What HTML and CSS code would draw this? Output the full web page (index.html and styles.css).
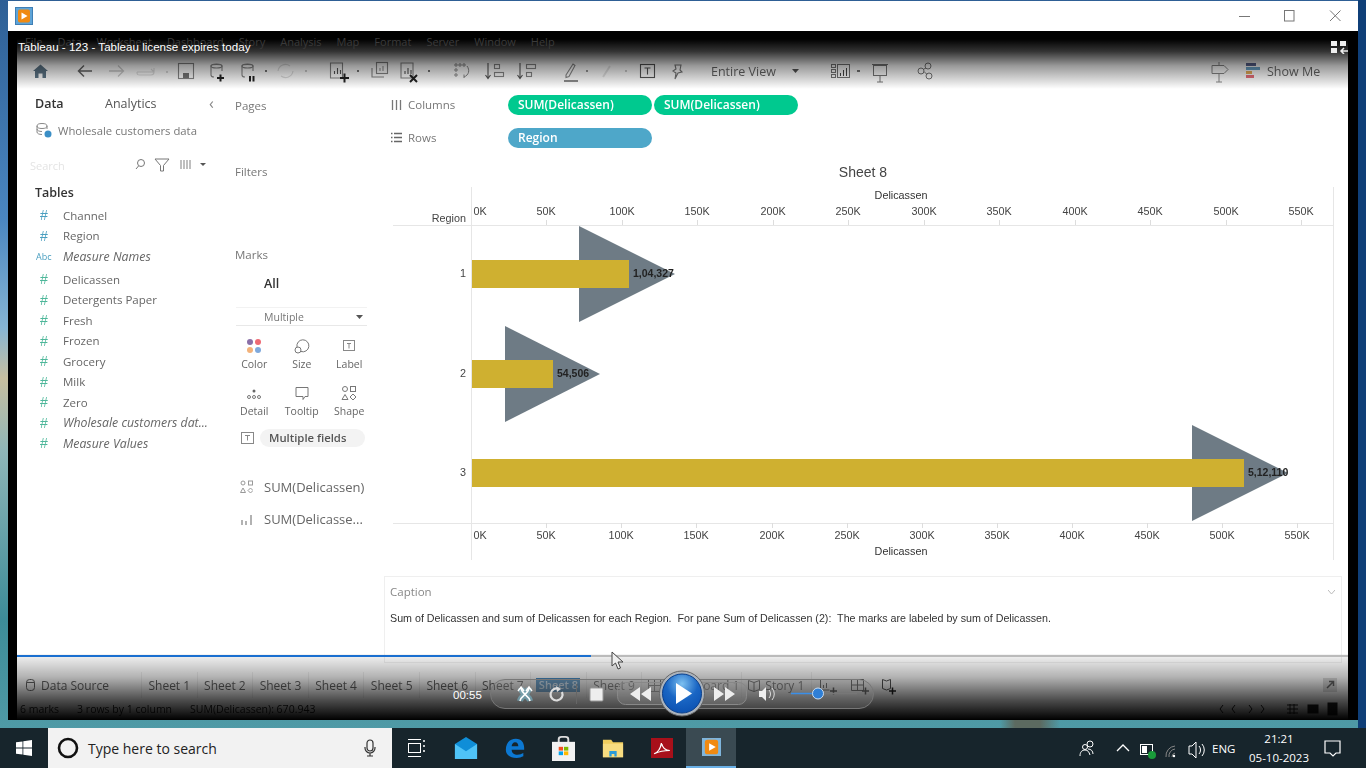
FILE: index.html
```html
<!DOCTYPE html>
<html lang="en">
<head>
<meta charset="utf-8">
<title>Tableau - 123</title>
<link rel="stylesheet" href="styles.css">
</head>
<body>
<div class="desktop">
  <div class="window">
    <div class="titlebar">
      <svg class="app-icon" width="18" height="18" viewBox="0 0 18 18"><rect x="0.5" y="0.5" width="17" height="17" fill="#5ea4d8" stroke="#3f7fb5"/><rect x="3" y="2.5" width="12" height="13" rx="2" fill="#f08a12"/><path d="M6.500 5.500v7l6-3.500z" fill="#fff"/></svg>
      <svg class="win-btns" width="116" height="14" viewBox="0 0 116 14"><path d="M0 7.500h11" stroke="#777"/><rect x="45.500" y="1.500" width="9.500" height="10.500" fill="none" stroke="#777"/><path d="M91 1.500l10.500 10.500M101.500 1.500L91 12" stroke="#777" fill="none"/></svg>
    </div>
    <div class="player">
      <div class="app">
        <div class="toolbar">
          <svg class="tools-a" width="690" height="34" viewBox="30 55 690 34" fill="none" stroke="#888" stroke-width="1.100">
            <path d="M33 71l7.500-6.500 7.500 6.500h-2v7h-3.500v-4.500h-4v4.500H35v-7z" fill="#5d7688" stroke="none"/>
            <path d="M92 71H79m5-5.500L78.500 71l5.500 5.500" stroke="#666" stroke-width="1.500"/>
            <path d="M109 71h14m-5-5.500l5.500 5.500-5.500 5.500" stroke="#ccc" stroke-width="1.300"/>
            <path d="M137 72h17v-4m0 4l-3-3m-14 3c0 3 1 3 3 3h11c2 0 3-1 3-3" stroke="#ddd"/><circle cx="167" cy="72" r="1" fill="#ccc" stroke="none"/>
            <rect x="178.500" y="63.500" width="15" height="15"/><rect x="183" y="73" width="6" height="5" fill="#777" stroke="none"/>
            <path d="M211 66c0-2 11-2 11 0v5m-11-5v9c0 1 1 2 3 2" /><ellipse cx="216.500" cy="66" rx="5.500" ry="2"/><path d="M217 78h7m-3.500-3.500v7" stroke="#222" stroke-width="2"/>
            <path d="M242 66c0-2 11-2 11 0v5m-11-5v9c0 1 1 2 3 2"/><ellipse cx="247.500" cy="66" rx="5.500" ry="2"/><path d="M250 76v5.500m3.500-5.500v5.500" stroke="#222" stroke-width="2"/><path d="M265 71l2 0" stroke="#777" stroke-width="2"/>
            <path d="M278 71a7.500 7.500 0 0 1 12-5m3 5a7.500 7.500 0 0 1-12 5" stroke="#ddd"/><path d="M305 71h2" stroke="#ccc" stroke-width="2"/>
            <path d="M330.500 63v15h12V63z"/><path d="M334.500 74v-3m3 3v-6m3 6v-4" stroke="#555"/><path d="M340 78h9m-4.500-4.500v9" stroke="#222" stroke-width="2"/><path d="M357 71h2" stroke="#777" stroke-width="2"/>
            <rect x="376.500" y="62.500" width="11" height="11"/><path d="M372 68v9h12" /><path d="M380 71v-3m3 3v-5" stroke="#999"/>
            <path d="M401 63v15h12V63z"/><path d="M405 74v-3m3 3v-6m3 6v-4" stroke="#555"/><path d="M410 75l7 7m0-7l-7 7" stroke="#222" stroke-width="2"/><path d="M428 71h2" stroke="#777" stroke-width="2"/>
            <g stroke="#888" stroke-width="1"><circle cx="456" cy="65" r="1.200"/><circle cx="460" cy="65" r="1.200"/><circle cx="464" cy="65" r="1.200"/><circle cx="456" cy="70" r="1.200"/><circle cx="456" cy="75" r="1.200"/><path d="M467 66c3 4 2 9-3 11m0-2.500V78"/></g>
            <path d="M488 63v15m-2.500-3l2.500 3.500 2.500-3.500" stroke="#555"/><rect x="494.500" y="64.500" width="5" height="4"/><rect x="494.500" y="72.500" width="9" height="4"/>
            <path d="M520 63v15m-2.500-3l2.500 3.500 2.500-3.500" stroke="#555"/><rect x="526.500" y="64.500" width="9" height="4"/><rect x="526.500" y="72.500" width="5" height="4"/>
            <path d="M566 75l7-11 2 1.500-6 11-3 1z" stroke="#888"/><path d="M564 81h14" stroke="#666" stroke-width="1.500"/><path d="M586 71h2" stroke="#999" stroke-width="2"/>
            <path d="M603 77l7-11" stroke="#e4e4e4" stroke-width="2"/><path d="M625 71h2" stroke="#ccc" stroke-width="2"/>
            <rect x="640.500" y="64.500" width="14" height="13" stroke="#555"/><path d="M644.500 68h6m-3 0v6.500" stroke="#555"/>
            <path d="M675 65l6 0-1 5 2 2-4 1-3 6 1-6-3-2 3-2z" stroke="#777"/>
          </svg>
          <span class="fit">Entire View</span>
          <svg class="tools-b" width="156" height="34" viewBox="785 55 156 34" fill="none" stroke="#777">
            <path d="M792 69h7l-3.500 4z" fill="#555" stroke="none"/>
            <rect x="831.500" y="64.500" width="4" height="3"/><rect x="831.500" y="69.500" width="4" height="3"/><rect x="831.500" y="74.500" width="4" height="3"/><rect x="837.500" y="64.500" width="12" height="13"/><path d="M840.500 76v-3m3 3v-6m3 6v-8" stroke="#444"/><path d="M857 71h3" stroke="#777" stroke-width="2"/>
            <rect x="873.500" y="65.500" width="13" height="10"/><path d="M872 64.500h16M880 76v6m-3 0h6" stroke="#777"/>
            <circle cx="921" cy="71" r="3"/><circle cx="928" cy="66" r="3"/><circle cx="929" cy="76" r="3"/><path d="M924 69l2-1m-2 3.500l3 3"/>
          </svg>
          <span class="grow"></span>
          <svg class="sign" width="18" height="22" viewBox="0 0 18 22" fill="none" stroke="#888"><path d="M1 4.500h12l4 4-4 4H1zM8 1v3.500m0 8V21m-3 0h6"/></svg>
          <svg class="showme-icon" width="14" height="18" viewBox="0 0 14 18"><rect width="10" height="3" fill="#5b6591"/><rect y="4" width="14" height="3" fill="#6aa3c8"/><rect y="8" width="6" height="3" fill="#eab05a"/><rect y="12" width="8" height="3" fill="#e8707a"/></svg>
          <span class="showme">Show Me</span>
        </div>
        <div class="main">
          <aside class="data-pane">
            <div class="tabs-row"><b>Data</b><span class="analytics">Analytics</span><span class="collapse">‹</span></div>
            <div class="ds-row">
              <svg width="18" height="16" viewBox="0 0 18 16" fill="none" stroke="#888"><ellipse cx="7" cy="4" rx="5" ry="2.500"/><path d="M2 4v6c0 1.500 2 2.500 5 2.500M12 4v3M2 7c0 1.500 2 2.500 5 2.500"/><circle cx="13" cy="12" r="3.500" fill="#3b8fc6" stroke="none"/></svg>
              <span>Wholesale customers data</span>
            </div>
            <div class="search-row">
              <span class="search-ph">Search</span>
              <svg width="76" height="16" viewBox="0 0 76 16" fill="none" stroke="#777"><circle cx="7" cy="6" r="3.500"/><path d="M4.500 9L2 12"/><path d="M21 2h14l-5.500 6.500V14h-3V8.500z"/><path d="M47 3v9m3-9v9m3-9v9m3-9v9" stroke="#aaa" stroke-width="1.500"/><path d="M66 6h6l-3 3z" fill="#555" stroke="none"/></svg>
            </div>
            <h2 class="tables">Tables</h2>
            <ul class="fields">
              <li><i class="hash blue">#</i>Channel</li>
              <li><i class="hash blue">#</i>Region</li>
              <li class="em"><i class="abc">Abc</i>Measure Names</li>
              <li class="gap"><i class="hash">#</i>Delicassen</li>
              <li><i class="hash">#</i>Detergents Paper</li>
              <li><i class="hash">#</i>Fresh</li>
              <li><i class="hash">#</i>Frozen</li>
              <li><i class="hash">#</i>Grocery</li>
              <li><i class="hash">#</i>Milk</li>
              <li><i class="hash">#</i>Zero</li>
              <li class="em"><i class="hash">#</i>Wholesale customers dat...</li>
              <li class="em"><i class="hash">#</i>Measure Values</li>
            </ul>
          </aside>
          <aside class="cards-pane">
            <div class="card-title pages">Pages</div>
            <div class="card-title filters">Filters</div>
            <div class="card-title">Marks</div>
            <div class="all">All</div>
            <div class="mark-type"><span>Multiple</span><svg width="7" height="4" viewBox="0 0 7 4"><path d="M0 0h7L3.500 4z" fill="#555"/></svg></div>
            <div class="mark-grid">
              <div class="mk"><svg width="16" height="16" viewBox="0 0 16 16"><circle cx="4" cy="4" r="3" fill="#8a6fa8"/><circle cx="12" cy="4" r="3" fill="#ee6a74"/><circle cx="4" cy="12" r="3" fill="#f3b27a"/><circle cx="12" cy="12" r="3" fill="#7fa9dc"/></svg>Color</div>
              <div class="mk"><svg width="16" height="16" viewBox="0 0 16 16" fill="none" stroke="#777"><path d="M3 9a6 6 0 1 1 4 4.500"/><circle cx="4" cy="12" r="3"/></svg>Size</div>
              <div class="mk"><svg width="14" height="16" viewBox="0 0 14 16" fill="none" stroke="#888"><rect x="1.500" y="2.500" width="11" height="10"/><path d="M5 5.500h4M7 5.500v5"/></svg>Label</div>
              <div class="mk"><svg width="16" height="16" viewBox="0 0 16 16" fill="none" stroke="#777"><circle cx="8" cy="6" r="1.500" fill="#666" stroke="none"/><circle cx="3" cy="12" r="1.500"/><circle cx="8" cy="12" r="1.500"/><circle cx="13" cy="12" r="1.500"/></svg>Detail</div>
              <div class="mk"><svg width="16" height="16" viewBox="0 0 16 16" fill="none" stroke="#777"><path d="M2 2.500h12v9h-3l-2 3v-3H2z"/></svg>Tooltip</div>
              <div class="mk"><svg width="16" height="16" viewBox="0 0 16 16" fill="none" stroke="#777"><circle cx="4" cy="4" r="2.500"/><rect x="9.500" y="1.500" width="5" height="5"/><path d="M4 9.500l3 5H1zM12 9l3 3-3 3-3-3z"/></svg>Shape</div>
            </div>
            <div class="mf-row">
              <svg width="13" height="13" viewBox="0 0 13 13" fill="none" stroke="#888"><rect x=".5" y=".5" width="12" height="11"/><path d="M4 3.500h5M6.500 3.500v5"/></svg>
              <span class="mf-pill">Multiple fields</span>
            </div>
            <div class="mark-sum first">
              <svg width="13" height="14" viewBox="0 0 13 14" fill="none" stroke="#999"><circle cx="3" cy="3" r="2"/><rect x="8.500" y="1" width="4" height="4"/><path d="M3 8l2.500 4.500h-5zM10.500 8l2.500 2.500-2.500 2.500L8 10.500z"/></svg>
              <span>SUM(Delicassen)</span>
            </div>
            <div class="mark-sum">
              <svg width="13" height="14" viewBox="0 0 13 14" fill="none" stroke="#999" stroke-width="1.500"><path d="M2 13V8M6 13V9M11 13V3"/></svg>
              <span>SUM(Delicasse...</span>
            </div>
          </aside>
          <section class="viz">
            <div class="shelf">
              <svg width="11" height="11" viewBox="0 0 11 11"><path d="M1.500 1v10M5.500 1v10M9.500 1v10" stroke="#777" stroke-width="1.300"/></svg>
              <span class="shelf-name">Columns</span>
              <span class="pill green">SUM(Delicassen)</span><span class="pill green">SUM(Delicassen)</span>
            </div>
            <div class="shelf">
              <svg width="11" height="11" viewBox="0 0 11 11"><path d="M0 1.500h1.500M3 1.500h8M0 5.500h1.500M3 5.500h8M0 9.500h1.500M3 9.500h8" stroke="#666" stroke-width="1.300"/></svg>
              <span class="shelf-name">Rows</span>
              <span class="pill blue-pill">Region</span>
            </div>
            <svg class="chart" width="957" height="418" viewBox="384 160 957 418">
              <text class="c-title" x="863" y="177" text-anchor="middle">Sheet 8</text>
              <g stroke="#e6e6e6" fill="none">
                <path d="M393 225.500H1333M393 523.500H1333M471.500 187V560M1333.500 187V560"/>
              </g>
              <text class="c-bold" x="901" y="199" text-anchor="middle">Delicassen</text>
              <text class="c-bold" x="901" y="555" text-anchor="middle">Delicassen</text>
              <text class="c-tick" x="466" y="222" text-anchor="end">Region</text>
              <g class="c-tick" text-anchor="middle">
                <text x="480" y="215">0K</text><text x="546" y="215">50K</text><text x="622" y="215">100K</text><text x="697" y="215">150K</text><text x="773" y="215">200K</text><text x="848" y="215">250K</text><text x="924" y="215">300K</text><text x="999" y="215">350K</text><text x="1075" y="215">400K</text><text x="1150" y="215">450K</text><text x="1226" y="215">500K</text><text x="1301" y="215">550K</text>
                <text x="480" y="539">0K</text><text x="546" y="539">50K</text><text x="621" y="539">100K</text><text x="696" y="539">150K</text><text x="772" y="539">200K</text><text x="847" y="539">250K</text><text x="922" y="539">300K</text><text x="997" y="539">350K</text><text x="1072" y="539">400K</text><text x="1147" y="539">450K</text><text x="1222" y="539">500K</text><text x="1297" y="539">550K</text>
              </g>
              <path stroke="#ddd" d="M546.500 220v5M622.500 220v5M697.500 220v5M773.500 220v5M848.500 220v5M924.500 220v5M999.500 220v5M1075.500 220v5M1150.500 220v5M1226.500 220v5M1301.500 220v5M546.500 523v5M621.500 523v5M696.500 523v5M772.500 523v5M847.500 523v5M922.500 523v5M997.500 523v5M1072.500 523v5M1147.500 523v5M1222.500 523v5M1297.500 523v5"/>
              <g class="c-tick" text-anchor="end"><text x="466" y="277">1</text><text x="466" y="377">2</text><text x="466" y="476">3</text></g>
              <g fill="#6e7b85"><path d="M579 226V322L675 274z"/><path d="M505 326V422L600 374z"/><path d="M1192 425V521L1288 473z"/></g>
              <g fill="#cfb030"><rect x="472" y="260" width="157" height="28"/><rect x="472" y="360" width="81" height="28"/><rect x="472" y="459" width="772" height="28"/></g>
              <g class="c-label"><text x="633" y="277">1,04,327</text><text x="557" y="377">54,506</text><text x="1248" y="476">5,12,110</text></g>
            </svg>
            <div class="caption">
              <div class="cap-title">Caption<svg width="7" height="4" viewBox="0 0 7 4"><path d="M0 0l3.500 4L7 0" fill="none" stroke="#bbb"/></svg></div>
              <p>Sum of Delicassen and sum of Delicassen for each Region.&nbsp; For pane Sum of Delicassen (2):&nbsp; The marks are labeled by sum of Delicassen.</p>
            </div>
          </section>
        </div>
        <div class="tabs">
          <span class="tab ds"><svg width="9" height="12" viewBox="0 0 9 12" fill="none" stroke="#666"><rect x=".5" y=".5" width="8" height="11" rx="3"/><path d="M.5 3.500h8"/></svg>Data Source</span>
          <span class="tab">Sheet 1</span><span class="tab">Sheet 2</span><span class="tab">Sheet 3</span><span class="tab">Sheet 4</span><span class="tab">Sheet 5</span><span class="tab">Sheet 6</span><span class="tab">Sheet 7</span><span class="tab"><span class="cur">Sheet 8</span></span><span class="tab">Sheet 9</span>
          <span class="tab dash"><svg width="13" height="13" viewBox="0 0 13 13" fill="none" stroke="#666"><path d="M.5.500h12v12H.5zM6.500.500v12M.5 6.500h12"/></svg>Dashboard 1</span>
          <span class="tab story"><svg width="12" height="13" viewBox="0 0 12 13" fill="none" stroke="#666"><path d="M.5 1.500l5.500 2 5.500-2v9l-5.500 2-5.500-2zM6 3.500v9"/></svg>Story 1</span>
          <svg class="tab-adds" width="88" height="20" viewBox="812 675 88 20" fill="none" stroke="#555"><path d="M820.500 679v11h9M823.500 688v-3m3 3v-5"/><path d="M830 691h7m-3.500-3.500v7" stroke="#333" stroke-width="1.500"/><path d="M851.500 679.500h12v11h-12zM857.500 679.500v11M851.500 685h12"/><path d="M862 691h7m-3.500-3.500v7" stroke="#333" stroke-width="1.500"/><path d="M882.500 679.500l4 1.500 4-1.500v9l-4 1.500-4-1.500z"/><path d="M889 691h7m-3.500-3.500v7" stroke="#222" stroke-width="1.500"/></svg>
          <span class="grow"></span>
          <svg class="expand" width="16" height="16" viewBox="0 0 16 16"><rect x=".5" y=".5" width="15" height="15" fill="#ddd" stroke="#fff"/><path d="M5 11l6-6M7 4.500h4.500V9" fill="none" stroke="#666" stroke-width="1.500"/></svg>
        </div>
        <div class="status"><span>6 marks</span><span>3 rows by 1 column</span><span>SUM(Delicassen): 670.943</span><span class="grow"></span>
          <svg class="views" width="125" height="14" viewBox="1220 703 125 14" fill="none" stroke="#1f1f1f"><path d="M1227 706l-3 4 3 4M1239 706l-3 4 3 4M1253 706l3 4-3 4M1265 706l3 4-3 4"/><path d="M1291 706h11M1291 710h11M1291 714h11M1294 705v10M1298 705v10"/><rect x="1312" y="706" width="10" height="8" fill="#222"/><rect x="1332" y="704" width="9" height="12" fill="#222"/></svg>
        </div>
      </div>
      <div class="shade-top"></div>
      <div class="shade-bottom"></div>
      <nav class="menu"><span>File</span><span>Data</span><span>Worksheet</span><span>Dashboard</span><span>Story</span><span>Analysis</span><span>Map</span><span>Format</span><span>Server</span><span>Window</span><span>Help</span></nav>
      <div class="video-title">Tableau - 123 - Tableau license expires today</div>
      <svg class="layout-icon" width="18" height="14" viewBox="0 0 18 14"><path d="M1 1h6v5H1zM10 1h6v5h-6zM1 8h6v5H1z" fill="#eee"/><path d="M18 11h-7m3-3l-3 3 3 3" fill="none" stroke="#eee" stroke-width="1.500"/></svg>
      <div class="seek"><div class="seek-done"></div></div>
      <svg class="cursor" width="14" height="20" viewBox="0 0 14 20"><path d="M1 1v14l3.500-3 2.500 6 2.500-1-2.500-6h5z" fill="#eee" stroke="#444"/></svg>
      <div class="time">00:55</div>
      <svg class="controls" width="400" height="50" viewBox="485 670 400 50">
        <defs>
          <radialGradient id="playFill" cx="50%" cy="25%" r="80%"><stop offset="0" stop-color="#7cc0f0"/><stop offset=".5" stop-color="#1a66c4"/><stop offset="1" stop-color="#0a4fb0"/></radialGradient>
        </defs>
        <rect x="490.500" y="679.500" width="383" height="29" rx="14.500" fill="#8a8a8a" fill-opacity=".28" stroke="#777"/>
        <path d="M520 701c1-6 8-6 9-13M530 701c-1-6-8-6-9-13" fill="none" stroke="#7fd4f0" stroke-width="6" opacity=".45"/>
        <path d="M520 701c1-6 8-6 9-13M530 701c-1-6-8-6-9-13" fill="none" stroke="#fff" stroke-width="1.600"/>
        <path d="M518 691l3-4 3 4M526 691l3-4 3 4" fill="none" stroke="#fff" stroke-width="1.400"/>
        <path d="M562 692a6 6 0 1 1-3-3" fill="none" stroke="#ddd" stroke-width="2.200"/><path d="M556 686l5 3-4 3z" fill="#ddd"/>
        <path d="M576.500 684v20" stroke="#666"/>
        <rect x="590" y="688" width="13" height="13" rx="1" fill="#eee" stroke="#999"/>
        <rect x="617.500" y="682.500" width="60" height="22" rx="8" fill="#999" fill-opacity=".25" stroke="#888"/>
        <rect x="686.500" y="682.500" width="60" height="22" rx="8" fill="#999" fill-opacity=".25" stroke="#888"/>
        <path d="M640 687v14l-10-7zM651 687v14l-10-7z" fill="#eee"/>
        <path d="M714 687v14l10-7zM725 687v14l10-7z" fill="#eee"/>
        <circle cx="682" cy="693.500" r="22.500" fill="#aab2bb" stroke="#666"/>
        <circle cx="682" cy="693.500" r="19.500" fill="url(#playFill)" stroke="#0a3f8c"/>
        <path d="M676 683v21l16-10.500z" fill="#fff"/>
        <path d="M759 691h3l4-4v14l-4-4h-3z" fill="#eee"/><path d="M769 690a6 6 0 0 1 0 8M772 688a9 9 0 0 1 0 12" fill="none" stroke="#ddd"/>
        <path d="M791 693.500h27" stroke="#3a8fe8" stroke-width="1.500"/><path d="M818 693.500h39" stroke="#777" stroke-width="1.500"/>
        <circle cx="818" cy="693.500" r="5.500" fill="#2f7fd6" stroke="#cde"/>
      </svg>
    </div>
  </div>
</div>
<footer class="taskbar">
  <div class="start"><svg width="16" height="16" viewBox="0 0 16 16" fill="#fff"><path d="M0 2.300l6.500-.9v6.200H0zM7.300 1.300L16 0v7.600H7.300zM0 8.400h6.500v6.200L0 13.700zM7.300 8.400H16V16l-8.700-1.200z"/></svg></div>
  <div class="search">
    <svg width="22" height="22" viewBox="0 0 22 22"><circle cx="11" cy="11" r="9" fill="none" stroke="#111" stroke-width="2.600"/></svg>
    <span class="search-text">Type here to search</span>
    <svg class="mic" width="12" height="18" viewBox="0 0 12 18" fill="none" stroke="#333" stroke-width="1.200"><rect x="3" y="1" width="6" height="11" rx="3"/><path d="M1 8v1a5 5 0 0 0 10 0V8M6 14v3M3 17h6"/></svg>
  </div>
  <div class="tb"><svg width="17" height="18" viewBox="0 0 17 18" fill="none" stroke="#fff"><path d="M0 .5h13M0 17.500h13"/><rect x=".5" y="4.500" width="12" height="9"/><path d="M16 1v2M16 6v2M16 11v2" stroke-width="1.500"/></svg></div>
  <div class="tb"><svg width="24" height="22" viewBox="0 0 26 28" preserveAspectRatio="none"><path d="M1 9L13 0l12 9v19H1z" fill="#0f8ed8"/><path d="M1 9l12 9 12-9v19H1z" fill="#4fc3f7"/></svg></div>
  <div class="tb"><svg width="20" height="20" viewBox="0 0 24 24"><path d="M1 14C1 6 6 1 13 1s10 5 10 11v2H8c0 4 3 6 7 6 3 0 5-1 7-2v4c-2 1-5 2-8 2-8 0-13-4-13-10zM8 10h8c0-3-1-5-4-5-2 0-4 2-4 5z" fill="#0c78d2"/></svg></div>
  <div class="tb"><svg width="23" height="25" viewBox="0 0 24 30" preserveAspectRatio="none"><path d="M7 8V4a3 3 0 0 1 3-3h4a3 3 0 0 1 3 3v4" fill="none" stroke="#ddd" stroke-width="2"/><rect y="7" width="24" height="23" fill="#f2f2f2"/><rect x="7" y="13" width="4.500" height="4.500" fill="#f25022"/><rect x="12.500" y="13" width="4.500" height="4.500" fill="#7fba00"/><rect x="7" y="18.500" width="4.500" height="4.500" fill="#00a4ef"/><rect x="12.500" y="18.500" width="4.500" height="4.500" fill="#ffb900"/></svg></div>
  <div class="tb"><svg width="22" height="19" viewBox="0 0 24 24" preserveAspectRatio="none"><path d="M1 1h9l2 3h11v19H1z" fill="#f0cd5e"/><rect x="1" y="6" width="22" height="17" fill="#f7dc80"/><path d="M8 22v-7h8v7h-2.500v-3h-3v3z" fill="#2a9bd8"/></svg></div>
  <div class="tb"><svg width="22" height="20" viewBox="0 0 21 24" preserveAspectRatio="none"><rect width="21" height="24" fill="#a8101a"/><path d="M3 19c4-2 6-6 7-13 1 6 3 9 8 9-5 0-10 1-15 4z" fill="none" stroke="#fff" stroke-width="1.300"/></svg></div>
  <div class="tb active"><svg width="19" height="18" viewBox="0 0 20 22" preserveAspectRatio="none"><rect width="20" height="22" fill="#7fb5dc"/><rect x="3" y="2" width="14" height="18" rx="3" fill="#f08a12"/><path d="M7.500 6.500v9l7-4.500z" fill="#fff"/></svg></div>
  <span class="grow"></span>
  <svg class="tray" width="135" height="40" viewBox="1075 728 135 40" fill="none" stroke="#fff">
    <circle cx="1090" cy="744" r="3"/><circle cx="1085" cy="747" r="2.500"/><path d="M1080 756c0-4 2-6 5-6s4 2 5 5M1088 749c3 0 5 2 5 5"/>
    <path d="M1117 751l6-6 6 6" stroke-width="1.300"/>
    <rect x="1140.500" y="744.500" width="12" height="10"/><rect x="1142" y="746" width="5" height="7" fill="#fff" stroke="none"/><circle cx="1152" cy="755" r="4" fill="#1a9a3a" stroke="none"/>
    <path d="M1166 757a10 10 0 0 1 9-11M1169 757a7 7 0 0 1 6-8M1172 757a4 4 0 0 1 3-4" stroke="#888"/><circle cx="1174" cy="756" r="1.200" fill="#fff" stroke="none"/>
    <path d="M1189 746h3l4-4v16l-4-4h-3zM1199 746a6 6 0 0 1 0 8M1202 744a9 9 0 0 1 0 12"/>
  </svg>
  <span class="lang">ENG</span>
  <div class="clock"><span>21:21</span><span>05-10-2023</span></div>
  <svg class="notify" width="17" height="17" viewBox="0 0 17 17" fill="none" stroke="#fff" stroke-width="1.200"><path d="M1 1h15v12h-4l-3 3-3-3H1z"/></svg>
</footer>
</body>
</html>
```
FILE: styles.css
```css
* { box-sizing: border-box; }
html, body { margin: 0; height: 100%; }
body {
  width: 1366px; height: 768px; overflow: hidden;
  display: flex; flex-direction: column;
  font-family: "Open Sans", "Liberation Sans", sans-serif;
  color: #555;
}
.grow { flex: 1; }
svg { display: block; flex: none; }
.desktop {
  height: 728px; padding: 1px 8px 8px 8px;
  background:
    linear-gradient(90deg, transparent 1358px, #0f3f78 1358px),
    linear-gradient(90deg, transparent 1000px, #5c6a60 1015px, #5c6a60 1040px, transparent 1060px) bottom / 100% 8px no-repeat,
    linear-gradient(180deg, #2e5f95 0, #4a86c0 30%, #86b5d4 45%, #c8c0a0 52%, #8fb6b8 62%, #3d8c98 85%, #4f9aa6 100%);
}
.window { height: 100%; display: flex; flex-direction: column; }
.titlebar {
  height: 30px; background: #fff; flex: none;
  display: flex; align-items: center; justify-content: space-between;
  padding: 0 3px 0 7px;
}
.player {
  position: relative; flex: 1; min-height: 0;
  background: #000; padding: 0 10px 0 9px;
  display: flex;
}
.app {
  flex: 1; min-width: 0; background: #fff;
  display: flex; flex-direction: column;
  padding-top: 24px;
  filter: blur(.35px);
}
.menu {
  position: absolute; left: 9px; top: 0;
  height: 21px; display: flex; align-items: center;
  font-size: 11px; padding-left: 8px;
}
.menu span { margin-right: 15px; color: #3a3a3a; }
.toolbar { height: 34px; flex: none; display: flex; align-items: center; padding-left: 13px; }
.fit { font-size: 12.500px; color: #666; width: 74px; margin: -2px 0 0 -9px; white-space: nowrap; }
.sign { margin-right: 17px; }
.showme-icon { margin-right: 7px; }
.showme { font-size: 12.500px; color: #666; width: 81px; margin-top: -2px; white-space: nowrap; }
.main { flex: 1; min-height: 0; display: grid; grid-template-columns: 207px 160px 1fr; }

.data-pane { font-size: 11.500px; }
.tabs-row { height: 28px; display: flex; align-items: center; padding-left: 18px; font-size: 12.500px; }
.tabs-row b { color: #333; font-weight: 600; width: 70px; }
.analytics { color: #555; width: 104px; }
.collapse { font-size: 16px; color: #888; line-height: 1; }
.ds-row { height: 26px; display: flex; align-items: center; gap: 5px; padding-left: 18px; font-size: 11.300px; color: #777; }
.search-row { margin-top: 10px; height: 24px; display: flex; align-items: center; justify-content: space-between; padding: 0 14px 0 13px; }
.search-ph { color: #e4e4e4; font-size: 11px; }
.tables { margin: 6px 0 2px; height: 20px; line-height: 20px; font-size: 12.500px; font-weight: 600; color: #333; padding-left: 18px; }
.fields { list-style: none; margin: 0; padding: 0; }
.fields li { height: 20.500px; display: flex; align-items: center; color: #666; white-space: nowrap; }
.fields li.gap { margin-top: 2.500px; }
.fields li.em { font-style: italic; font-size: 12.300px; }
.hash { width: 46px; text-align: center; padding-left: 8px; font-style: normal; font-family: "Liberation Sans", sans-serif; font-size: 14px; color: #4eb79a; flex: none; }
.hash.blue { color: #4a9fc0; }
.abc { width: 46px; padding-left: 19px; font-style: normal; font-size: 9px; color: #4a9fc0; flex: none; }

.cards-pane { padding: 9px 17px 0 11px; font-size: 11px; }
.card-title { height: 16px; line-height: 16px; font-size: 11.500px; color: #777; }
.pages { margin-bottom: 50px; }
.filters { margin-bottom: 67px; }
.all { margin: 11px 0 0 29px; height: 20px; line-height: 20px; font-size: 12.500px; font-weight: 600; color: #333; }
.mark-type { margin: 13px 0 0 1px; height: 19px; display: flex; align-items: center; justify-content: space-between; padding: 0 4px 0 28px; border-top: 1px solid #f2f2f2; border-bottom: 1px solid #e8e8e8; color: #777; font-size: 10.500px; }
.mark-grid { margin: 6px 0 0 -4.500px; width: 142.500px; display: grid; grid-template-columns: repeat(3, 47.500px); grid-auto-rows: 47px; }
.mk { display: flex; flex-direction: column; align-items: center; gap: 3px; padding-top: 6px; font-size: 10.500px; color: #666; white-space: nowrap; }
.mf-row { margin-top: 3px; display: flex; align-items: center; gap: 6px; padding-left: 6px; }
.mf-pill { width: 105px; height: 18px; line-height: 18px; border-radius: 9px; background: #f3f3f3; padding-left: 9px; font-size: 11.300px; font-weight: 600; color: #555; white-space: nowrap; }
.mark-sum { display: flex; align-items: center; gap: 11px; padding-left: 5px; height: 32px; font-size: 13px; color: #666; white-space: nowrap; }
.mark-sum.first { margin-top: 24px; }

.viz { min-width: 0; margin-top: -1px; padding-bottom: 9px; display: flex; flex-direction: column; }
.shelf { height: 33px; display: flex; align-items: center; padding-left: 7px; flex: none; }
.shelf-name { width: 100px; margin-left: 6px; font-size: 11.500px; color: #777; }
.pill { width: 144px; height: 20px; line-height: 20px; border-radius: 10px; color: #fff; padding-left: 10px; font-size: 12px; font-weight: 600; margin-right: 2px; white-space: nowrap; }
.green { background: #00c98f; }
.blue-pill { background: #4ea7c9; }
.chart { margin-top: 6px; flex: none; }
.c-title { font: 14px "Liberation Sans", sans-serif; fill: #444; }
.c-bold { font: 10.800px "Liberation Sans", sans-serif; fill: #333; }
.c-tick, .c-tick text { font: 10.800px "Liberation Sans", sans-serif; fill: #444; }
.c-label text { font: bold 10.500px "Liberation Sans", sans-serif; fill: #222; }
.caption { flex: 1; min-height: 0; margin: -2px 6px 0 0; border: 1px solid #efefef; padding: 7px 6px 7px 5px; }
.cap-title { font-size: 11.500px; color: #888; display: flex; justify-content: space-between; align-items: center; }
.caption p { margin: 13px 0 0; font: 10.700px "Liberation Sans", sans-serif; color: #333; white-space: nowrap; }

.tabs { height: 26px; flex: none; display: flex; align-items: center; font-size: 12px; color: #666; }
.tab { width: 55.600px; height: 100%; display: flex; align-items: center; justify-content: center; white-space: nowrap; flex: none; border-right: 1px solid rgba(0,0,0,.06); }
.tab.ds { width: 125px; justify-content: flex-start; gap: 6px; padding-left: 9px; }
.cur { color: #d5ecff; font-weight: 600; background: #4a90c8; width: 44px; height: 14px; line-height: 14px; text-align: center; font-size: 11px; }
.tab.dash { width: 100px; justify-content: flex-start; padding-left: 6px; gap: 6px; }
.tab.story { width: 70px; justify-content: flex-start; padding-left: 6px; gap: 5px; }
.expand { margin-right: 10px; }
.status { height: 22px; flex: none; display: flex; gap: 18px; align-items: center; font-size: 10.500px; color: #222; padding-left: 3px; }
.views { margin: 0 7px 0 0; }

.shade-top { position: absolute; left: 0; right: 0; top: 0; height: 58px; background: linear-gradient(180deg, #000 14%, rgba(0,0,0,.8) 35%, rgba(0,0,0,.4) 60%, transparent 100%); pointer-events: none; }
.shade-bottom { position: absolute; left: 0; right: 0; bottom: 0; height: 66px; background: linear-gradient(180deg, rgba(0,0,0,.04) 0, rgba(0,0,0,.3) 35%, rgba(0,0,0,.7) 70%, #000 100%); pointer-events: none; }
.video-title { position: absolute; left: 10px; top: 8px; font: 11.600px/16px "Liberation Sans", sans-serif; color: #fff; white-space: nowrap; }
.layout-icon { position: absolute; right: 10px; top: 9px; }
.seek { position: absolute; left: 9px; right: 10px; top: 624px; height: 2px; background: #bbb; }
.seek-done { width: 574px; height: 2px; background: #1a6fd0; }
.cursor { position: absolute; left: 603px; top: 620px; }
.time { position: absolute; left: 445px; top: 657px; font: 11.500px/14px "Liberation Sans", sans-serif; color: #fff; }
.controls { position: absolute; left: 477px; top: 639px; }

.taskbar { height: 40px; flex: none; background: #17252c; display: flex; align-items: center; color: #fff; }
.start { width: 48px; display: flex; justify-content: center; }
.search { width: 344px; height: 40px; background: #f2f2f2; display: flex; align-items: center; padding: 0 14px 0 9px; }
.search-text { margin-left: 9px; flex: 1; font: 14px "Open Sans", sans-serif; color: #222; white-space: nowrap; }
.mic { margin-right: 2px; }
.tb { width: 49px; height: 40px; display: flex; align-items: center; justify-content: center; flex: none; }
.tb.active { width: 50px; background: #3a4a52; border-bottom: 2px solid #6ab0e6; }
.lang { width: 31px; font-size: 11.500px; margin-left: 2px; }
.clock { width: 72px; display: flex; flex-direction: column; align-items: center; font-size: 11.500px; line-height: 19px; }
.notify { margin: 0 25px 0 9px; }
```
